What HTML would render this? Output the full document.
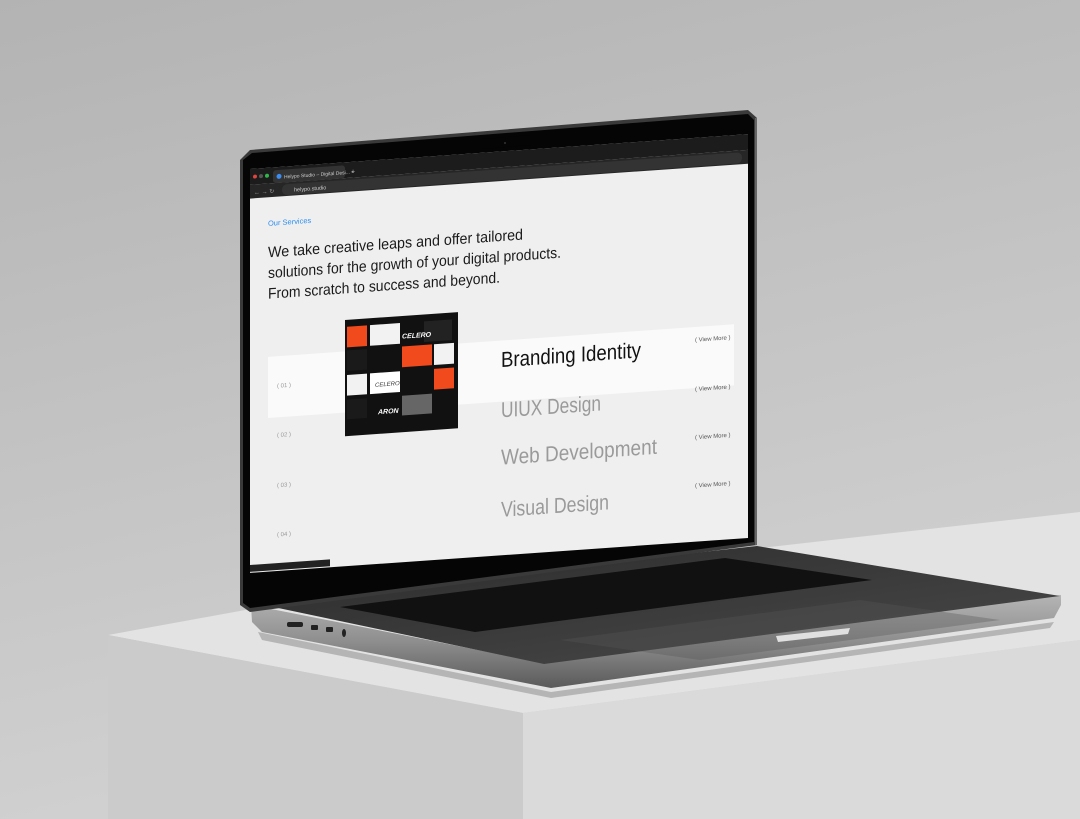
<!DOCTYPE html>
<html><head><style>
html,body{margin:0;padding:0;width:1080px;height:819px;overflow:hidden;background:#bdbdbd}
svg{display:block}
text{font-family:"Liberation Sans",sans-serif}
</style></head><body>
<svg width="1080" height="819" viewBox="0 0 1080 819" xmlns="http://www.w3.org/2000/svg">
<defs>
<linearGradient id="bg" x1="0" y1="0" x2="0.3" y2="1"><stop offset="0" stop-color="#b3b3b3"/><stop offset="1" stop-color="#d2d2d2"/></linearGradient>
<linearGradient id="silver" x1="0" y1="0" x2="0" y2="1"><stop offset="0" stop-color="#b5b5b5"/><stop offset="0.5" stop-color="#8e8e8e"/><stop offset="1" stop-color="#5a5a5a"/></linearGradient>
<linearGradient id="deck" x1="0" y1="0" x2="1" y2="1"><stop offset="0" stop-color="#2b2b2b"/><stop offset="1" stop-color="#4a4a4a"/></linearGradient>
</defs>
<rect width="1080" height="819" fill="url(#bg)"/>
<polygon points="108,635 300,600 1080,512 1080,640 523,713" fill="#e3e3e3"/>
<polygon points="108,635 523,713 523,819 108,819" fill="#cbcbcb"/>
<polygon points="523,713 1080,640 1080,819 523,819" fill="#dadada"/>
<polygon points="258,632 551,692 1054,622 1050,628 551,698 262,640" fill="#888" opacity="0.5"/>
<polygon points="251,605 544,663 1061,595 1061,605 1054,618 551,688 262,632 252,622" fill="url(#silver)"/>
<polygon points="250,602 757,546 1060,596 544,664" fill="url(#deck)"/>
<polygon points="340,607 725,558 872,580 475,632" fill="#111"/>
<polygon points="560,640 860,600 1000,620 700,660" fill="#555" opacity="0.35"/>
<polygon points="776,636 850,628 848,634 778,642" fill="#e0e0e0"/>
<rect x="287" y="622" width="16" height="5" rx="2" fill="#222"/>
<rect x="311" y="625" width="7" height="5" rx="1" fill="#222"/>
<rect x="326" y="627" width="7" height="5" rx="1" fill="#222"/>
<ellipse cx="344" cy="633" rx="2" ry="4" fill="#222"/>
<polygon points="240,160 250,150 748,110 757,118 757,545 250,612 240,605" fill="#3a3a3a"/>
<polygon points="243,160 252,153 748,114 754,120 754,542 250,608 243,603" fill="#050505"/>
<g transform="matrix(1,-0.07,0,0.985,250,171)">
  <rect x="0" y="-2" width="498" height="410" fill="#efefef"/>
  <rect x="0" y="-2" width="498" height="16" fill="#1c1c1c"/>
  <rect x="0" y="14" width="498" height="14" fill="#262626"/>
  <circle cx="5" cy="6" r="2" fill="#e0443e"/><circle cx="11" cy="6" r="2" fill="#555"/><circle cx="17" cy="6" r="2" fill="#2fb84a"/>
  <rect x="23" y="1" width="72" height="13" rx="3" fill="#333"/>
  <circle cx="29" cy="7.5" r="2.5" fill="#3b8df2"/>
  <text x="34" y="10" font-size="5" fill="#ccc">Helypo Studio – Digital Desi...  ×</text>
  <text x="101" y="10" font-size="7" fill="#aaa">+</text>
  <text x="4" y="24" font-size="6" fill="#999">←  →  ↻</text>
  <rect x="32" y="16" width="460" height="11" rx="5" fill="#333"/>
  <text x="44" y="24" font-size="5.5" fill="#ccc">helypo.studio</text>
  <text x="18" y="57" font-size="7.5" fill="#2a8ef0">Our Services</text>
  <text x="18" y="89" font-size="15.5" fill="#1a1a1a" textLength="255" lengthAdjust="spacingAndGlyphs">We take creative leaps and offer tailored</text>
  <text x="18" y="110" font-size="15.5" fill="#1a1a1a" textLength="293" lengthAdjust="spacingAndGlyphs">solutions for the growth of your digital products.</text>
  <text x="18" y="131" font-size="15.5" fill="#1a1a1a" textLength="232" lengthAdjust="spacingAndGlyphs">From scratch to success and beyond.</text>
  <rect x="18" y="190" width="466" height="62" fill="#fafafa"/>
  <g>
    <rect x="95" y="158" width="113" height="118" fill="#111"/>
    <rect x="97" y="165" width="20" height="21" fill="#f04a1d"/>
    <rect x="120" y="165" width="30" height="21" fill="#f2f2f2"/>
    <rect x="174" y="165" width="28" height="21" fill="#222"/>
    <text x="152" y="181" font-size="7" font-weight="bold" font-style="italic" fill="#fff">CELERO</text>
    <rect x="97" y="189" width="20" height="21" fill="#1a1a1a"/>
    <rect x="152" y="189" width="30" height="21" fill="#f04a1d"/>
    <rect x="184" y="189" width="20" height="21" fill="#f2f2f2"/>
    <rect x="97" y="214" width="20" height="21" fill="#f2f2f2"/>
    <rect x="120" y="214" width="30" height="21" fill="#fff"/>
    <text x="125" y="228" font-size="6" font-style="italic" fill="#333">CELERO</text>
    <rect x="184" y="214" width="20" height="21" fill="#f04a1d"/>
    <rect x="97" y="239" width="20" height="20" fill="#1a1a1a"/>
    <rect x="152" y="239" width="30" height="20" fill="#666"/>
    <text x="128" y="256" font-size="7" font-weight="bold" font-style="italic" fill="#fff">ARON</text>
  </g>
  <text x="251" y="217" font-size="22" fill="#111" textLength="140" lengthAdjust="spacingAndGlyphs">Branding Identity</text>
  <text x="251" y="268" font-size="22" fill="#9a9a9a" textLength="100" lengthAdjust="spacingAndGlyphs">UIUX Design</text>
  <text x="251" y="316" font-size="22" fill="#9a9a9a" textLength="156" lengthAdjust="spacingAndGlyphs">Web Development</text>
  <text x="251" y="369" font-size="22" fill="#9a9a9a" textLength="108" lengthAdjust="spacingAndGlyphs">Visual Design</text>
  <text x="27" y="222" font-size="6" fill="#999">( 01 )</text>
  <text x="27" y="272" font-size="6" fill="#999">( 02 )</text>
  <text x="27" y="323" font-size="6" fill="#999">( 03 )</text>
  <text x="27" y="373" font-size="6" fill="#999">( 04 )</text>
  <text x="445" y="205" font-size="6" fill="#555">( View More )</text>
  <text x="445" y="255" font-size="6" fill="#555">( View More )</text>
  <text x="445" y="304" font-size="6" fill="#555">( View More )</text>
  <text x="445" y="353" font-size="6" fill="#555">( View More )</text>
  <rect x="0" y="400" width="80" height="7" fill="#222"/>
</g>
<polygon points="483,139 530,135 530,145 483,149" fill="#050505"/>
<circle cx="505" cy="143" r="1" fill="#333"/>
<polygon points="755,118 757,118 757,545 755,545" fill="#666"/>
</svg>
</body></html>
